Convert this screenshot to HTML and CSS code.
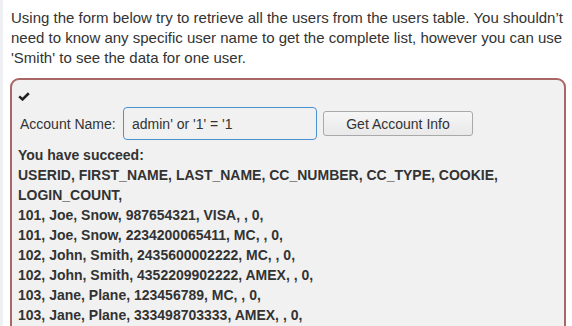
FILE: index.html
```html
<!DOCTYPE html>
<html>
<head>
<meta charset="utf-8">
<link rel="stylesheet" href="styles.css">
</head>
<body>
<div class="rail"></div>
<div class="main">
  <p class="intro">Using the form below try to retrieve all the users from the users table. You shouldn’t need to know any specific user name to get the complete list, however you can use 'Smith' to see the data for one user.</p>
  <div class="attack">
    <div class="status"><svg width="12" height="9" viewBox="0 0 12 9"><path d="M1.2 4.4 L4.5 7.4 L10.8 1.2" fill="none" stroke="#222" stroke-width="2.6"/></svg></div>
    <form class="row">
      <label class="label">Account Name:</label>
      <input class="field" type="text" value="admin' or '1' = '1">
      <button class="btn" type="button">Get Account Info</button>
    </form>
    <div class="output">
      <div>You have succeed:</div>
      <div>USERID, FIRST_NAME, LAST_NAME, CC_NUMBER, CC_TYPE, COOKIE, LOGIN_COUNT, </div>
      <div>101, Joe, Snow, 987654321, VISA, , 0, </div>
      <div>101, Joe, Snow, 2234200065411, MC, , 0, </div>
      <div>102, John, Smith, 2435600002222, MC, , 0, </div>
      <div>102, John, Smith, 4352209902222, AMEX, , 0, </div>
      <div>103, Jane, Plane, 123456789, MC, , 0, </div>
      <div>103, Jane, Plane, 333498703333, AMEX, , 0, </div>
    </div>
  </div>
</div>
</body>
</html>
```
FILE: styles.css
```css
html, body {
  margin: 0;
  height: 100%;
  overflow: hidden;
}
body {
  display: flex;
  font-family: "Liberation Sans", Arial, sans-serif;
  font-size: 14px;
  line-height: 20px;
  color: #333;
  background: #fff;
}
.rail {
  width: 3px;
  flex: none;
  background: #eef0f4;
}
.main {
  flex: 1;
  padding: 8px 6px 0 7px;
}
.intro {
  margin: 0 0 10px;
  padding-left: 1px;
  font-size: 15px;
}
.attack {
  border: 2px solid #a86664;
  border-radius: 9px;
  background: #f1f1f1;
  padding: 6px 6px 40px 6px;
}
.status {
  height: 20px;
  display: flex;
  align-items: center;
}
.row {
  display: flex;
  align-items: center;
  margin: 1px 0 5px;
}
.label {
  margin-left: 2px;
  width: 103px;
}
.field {
  box-sizing: border-box;
  width: 194px;
  height: 33px;
  border: 1px solid #4d90d0;
  border-radius: 4px;
  background: #f1f1f1;
  font: 14px "Liberation Sans", Arial, sans-serif;
  color: #333;
  padding: 0 8px;
  outline: none;
}
.btn {
  box-sizing: border-box;
  margin-left: 6px;
  width: 150px;
  height: 25px;
  border: 1px solid #a9a9a9;
  border-radius: 3px;
  background: linear-gradient(#f6f6f6, #e9e9e9);
  font: 14px "Liberation Sans", Arial, sans-serif;
  color: #333;
  padding: 0;
}
.output {
  font-weight: bold;
}
```
